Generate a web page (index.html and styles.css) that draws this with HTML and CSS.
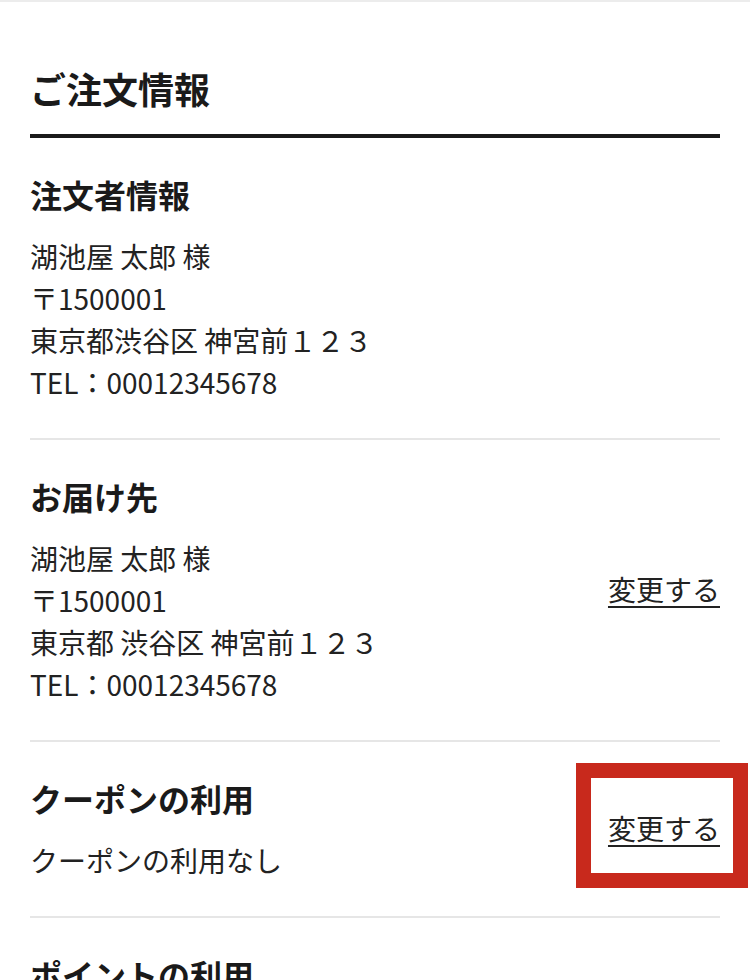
FILE: index.html
```html
<!DOCTYPE html>
<html lang="ja">
<head>
  <meta charset="UTF-8" />
  <meta name="viewport" content="width=device-width, initial-scale=1.0"/>
  <title>ご注文情報</title>
  <link rel="stylesheet" href="styles.css">
</head>
<body>
  <div class="topbar"></div>
  <main class="order">
    <h1 class="order-title">ご注文情報</h1>

    <section class="order-block">
      <div class="block-main">
        <h2 class="block-title">注文者情報</h2>
        <p>湖池屋 太郎 様</p>
        <p>〒1500001</p>
        <p>東京都渋谷区 神宮前１２３</p>
        <p>TEL：00012345678</p>
      </div>
    </section>

    <section class="order-block">
      <div class="block-main">
        <h2 class="block-title">お届け先</h2>
        <p>湖池屋 太郎 様</p>
        <p>〒1500001</p>
        <p>東京都 渋谷区 神宮前１２３</p>
        <p>TEL：00012345678</p>
      </div>
      <a class="block-link" href="#">変更する</a>
    </section>

    <section class="order-block">
      <div class="block-main">
        <h2 class="block-title">クーポンの利用</h2>
        <p>クーポンの利用なし</p>
      </div>
      <a class="block-link marked" href="#">変更する<span class="mark"></span></a>
    </section>

    <section class="order-block">
      <div class="block-main">
        <h2 class="block-title">ポイントの利用</h2>
        <p>ポイントの利用なし</p>
      </div>
      <a class="block-link" href="#">変更する</a>
    </section>
  </main>
</body>
</html>
```

FILE: styles.css
```css
body { margin: 0; background: #fff; color: #222; font-family: "Noto Sans CJK JP", "Noto Sans", sans-serif; }
.topbar { height: 2px; background: #ececec; }
.order { padding: 0 30px; }
.order-title { margin: 59px 0 0; padding-bottom: 19px; border-bottom: 4px solid #1a1a1a; font-size: 36px; line-height: 1.5; font-weight: bold; color: #1a1a1a; }
.order-block { display: flex; justify-content: space-between; align-items: center; padding: 32px 0 35px; border-bottom: 2px solid #e6e6e6; }
.block-title { margin: 0 0 17px; font-size: 32px; line-height: 1.5; font-weight: bold; color: #1a1a1a; }
.block-main p { margin: 0; font-size: 28px; line-height: 1.5; }
.block-link { font-size: 28px; line-height: 1.5; color: #222; text-decoration: underline; text-underline-offset: 5px; text-decoration-thickness: 2px; }
.marked { position: relative; }
.mark { position: absolute; left: -32px; top: -44px; width: 142px; height: 95px; border: 15px solid #c8291c; }
```
